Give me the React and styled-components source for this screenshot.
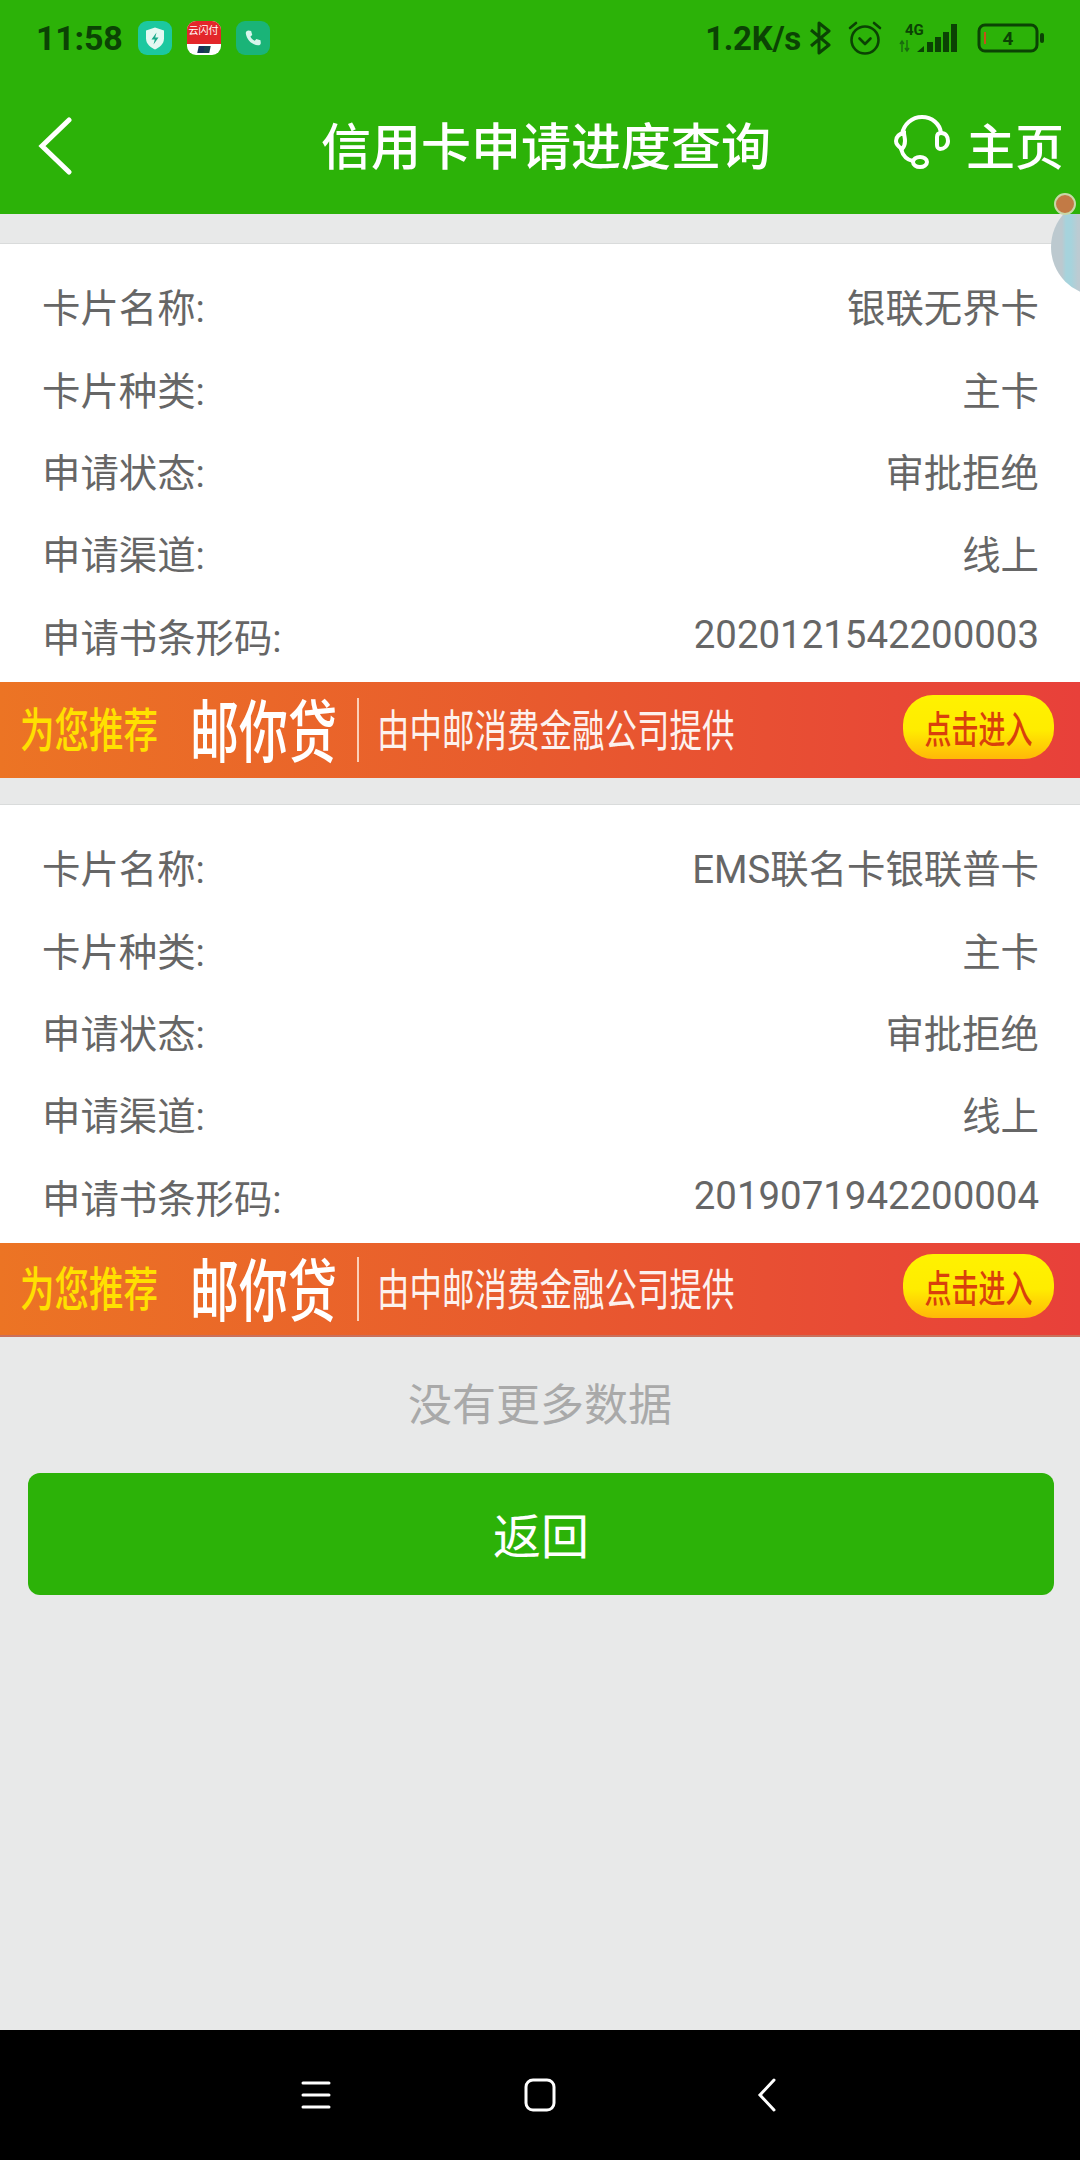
import React from 'react';
import styled, { createGlobalStyle } from 'styled-components';

const GREEN = '#2cb208';
const STATUS_INK = '#0b4304';

const GlobalStyle = createGlobalStyle`
  html, body {
    margin: 0;
    padding: 0;
    background: #e8e9e9;
    font-family: Roboto, "Noto Sans CJK SC", sans-serif;
  }
  * { box-sizing: border-box; }
`;

const Page = styled.div`
  position: relative;
  width: 1080px;
  height: 2160px;
  display: flex;
  flex-direction: column;
  overflow: hidden;
  background: #e8e9e9;
`;

const TopArea = styled.header`
  position: relative;
  z-index: 2;
  background: ${GREEN};
  height: 214px;
  flex-shrink: 0;
`;

const StatusBar = styled.div`
  height: 78px;
  padding: 0 35px 2px 36px;
  display: flex;
  align-items: center;
  justify-content: space-between;
`;

const StatusGroup = styled.div`
  display: flex;
  align-items: center;
  gap: ${props => props.$gap || 15}px;
`;

const Clock = styled.span`
  font-size: 34px;
  font-weight: 700;
  color: ${STATUS_INK};
  letter-spacing: -0.2px;
`;

const Speed = styled.span`
  font-size: 33px;
  font-weight: 700;
  color: ${STATUS_INK};
  letter-spacing: -0.3px;
  margin-right: -8px;
`;

const AppBadge = styled.div`
  width: 34px;
  height: 34px;
  border-radius: 9px;
  background: ${props => props.$bg};
  display: flex;
  align-items: center;
  justify-content: center;
`;

const PayBadge = styled.div`
  width: 34px;
  height: 34px;
  border-radius: 9px;
  overflow: hidden;
  background: #fff;
  display: flex;
  flex-direction: column;
`;

const PayTop = styled.div`
  height: 23px;
  background: #e3262a;
  color: #fff;
  font-size: 10px;
  line-height: 17px;
  text-align: center;
  white-space: nowrap;
  font-family: "Noto Sans CJK SC", sans-serif;
`;

const PayMark = styled.div`
  width: 12px;
  height: 7px;
  margin: 2px auto 0;
  background: linear-gradient(90deg, #17325c 50%, #16434f 50%);
  transform: skewX(-12deg);
`;

const NavBar = styled.div`
  height: 136px;
  display: grid;
  grid-template-columns: 230px 1fr 230px;
  align-items: center;
  padding-bottom: 6px;
`;

const BackButton = styled.div`
  padding: 6px 0 0 38px;
  display: flex;
  align-items: center;
`;

const Title = styled.h1`
  margin: 0;
  padding-left: 12px;
  text-align: center;
  color: #fff;
  font-size: 50px;
  font-weight: 500;
  white-space: nowrap;
`;

const HomeLink = styled.div`
  display: flex;
  align-items: center;
  justify-content: flex-end;
  gap: 16px;
  padding-right: 16px;
  color: #fff;
  font-size: 49px;
  font-weight: 500;
`;

const Content = styled.main`
  flex: 1;
  padding-top: 29px;
`;

const Record = styled.section`
  margin-bottom: ${props => props.$last ? 0 : 26}px;
`;

const Card = styled.div`
  background: #fff;
  border-top: 1px solid #d9dbdb;
  padding: 20px 41px 6px 42px;
`;

const Row = styled.div`
  height: 82.4px;
  display: flex;
  align-items: center;
  justify-content: space-between;
  color: #666;
  font-size: 38.4px;
  white-space: nowrap;
`;

const Banner = styled.div`
  height: ${props => props.$last ? 94 : 96}px;
  padding: 0 26px 6px 20px;
  display: flex;
  align-items: center;
  background: linear-gradient(90deg, #ec7424 0%, #e85a2e 50%, #e8403a 100%);
  border-bottom: ${props => props.$last ? '2px solid #c9705c' : 'none'};
  font-family: "Noto Sans CJK SC", sans-serif;
`;

const BannerLead = styled.span`
  color: #ffe000;
  font-size: 34.5px;
  font-weight: 500;
  white-space: nowrap;
  transform: scaleY(1.35);
`;

const BannerBrand = styled.span`
  color: #fff;
  font-size: 49px;
  font-weight: 500;
  margin-left: 32px;
  white-space: nowrap;
  transform: scaleY(1.4);
`;

const BannerRule = styled.span`
  width: 2px;
  height: 64px;
  margin: 6px 18px 0 20px;
  background: rgba(255, 235, 220, 0.8);
`;

const BannerText = styled.span`
  color: #fff;
  opacity: 0.92;
  font-size: 32.5px;
  white-space: nowrap;
  transform: scaleY(1.38);
`;

const EnterPill = styled.div`
  margin-left: auto;
  width: 151px;
  height: 64px;
  border-radius: 30px;
  background: linear-gradient(180deg, #fff200 0%, #ffec00 55%, #ffb808 100%);
  display: flex;
  align-items: center;
  justify-content: center;
`;

const EnterLabel = styled.span`
  color: #d9400c;
  font-size: 27px;
  font-weight: 500;
  white-space: nowrap;
  transform: scaleY(1.4);
`;

const NoMore = styled.div`
  height: 136px;
  display: flex;
  align-items: center;
  justify-content: center;
  color: #a9a9a9;
  font-size: 44px;
  padding-bottom: 6px;
`;

const BackAction = styled.button`
  display: block;
  width: 1026px;
  height: 122px;
  margin: 0 26px 0 28px;
  border: none;
  border-radius: 12px;
  background: ${GREEN};
  color: #fff;
  font-family: inherit;
  font-size: 48px;
  padding-bottom: 2px;
`;

const SystemBar = styled.footer`
  height: 130px;
  flex-shrink: 0;
  background: #000;
  display: grid;
  grid-template-columns: repeat(3, 32px);
  justify-content: center;
  column-gap: 192px;
  align-items: center;
  justify-items: center;
`;

const FloatDot = styled.div`
  position: absolute;
  left: 1054px;
  top: 193px;
  width: 22px;
  height: 22px;
  border-radius: 50%;
  background: #c27a45;
  border: 2px solid #c8d8a8;
  z-index: 3;
`;

const FloatBall = styled.div`
  position: absolute;
  left: 1051px;
  top: 198px;
  width: 98px;
  height: 98px;
  border-radius: 50%;
  background: linear-gradient(90deg, #bcc9cf 0, #bcc9cf 11px, #a6d3dc 15px, #a6d3dc 20px, #bccbd2 27px);
  z-index: 1;
`;

const ShieldIcon = () => (
  <svg width="20" height="25" viewBox="0 0 20 24">
    <path d="M10 1 L19 4 V12 C19 18 14 21 10 23 C6 21 1 18 1 12 V4 Z" fill="#e4f8f2" />
    <path d="M11.5 6 L6.5 13 H9.8 L8.5 18 L13.5 11 H10.2 Z" fill="#17a98a" />
  </svg>
);

const PhoneIcon = () => (
  <svg width="18" height="18" viewBox="0 0 24 24">
    <path d="M6 2 L9.5 2.6 L11 8 L8.6 10 C9.8 12.8 11.6 14.6 14.4 15.8 L16.4 13.4 L22 15 L22.4 18.6 C22.4 20.6 20.6 22 18.6 21.8 C10 20.8 3.4 14 2.4 5.6 C2.2 3.6 4 2 6 2 Z" fill="#d8f5ec" />
  </svg>
);

const BluetoothIcon = () => (
  <svg width="22" height="36" viewBox="0 0 22 36" fill="none" stroke={STATUS_INK} strokeWidth="3" strokeLinejoin="round">
    <path d="M2 10 L20 25 L10 33 V3 L20 11 L2 26" />
  </svg>
);

const AlarmIcon = () => (
  <svg width="36" height="36" viewBox="0 0 36 36" fill="none" stroke={STATUS_INK} strokeWidth="2.6" strokeLinecap="round" strokeLinejoin="round">
    <circle cx="18" cy="20" r="13.5" />
    <path d="M12.5 18.5 L18 24 L23.5 18.5" />
    <path d="M3 8 L9 3" />
    <path d="M33 8 L27 3" />
  </svg>
);

const SignalIcon = () => (
  <svg width="62" height="32" viewBox="0 0 62 32">
    <text x="6" y="13" fontFamily="Roboto, sans-serif" fontWeight="700" fontSize="15" fill={STATUS_INK}>4G</text>
    <path d="M3 30 V19 M1 22 L3 19 L5 22 M8 18 V29 M6 26 L8 29 L10 26" stroke="#1a6a10" strokeWidth="1.4" fill="none" />
    <path d="M18 30 L25 24 V30 Z" fill={STATUS_INK} />
    <rect x="28" y="20" width="6" height="10" fill={STATUS_INK} />
    <rect x="36" y="15" width="6" height="15" fill={STATUS_INK} />
    <rect x="44" y="10" width="6" height="20" fill={STATUS_INK} />
    <rect x="52" y="2" width="6" height="28" fill={STATUS_INK} />
  </svg>
);

const BatteryIcon = () => (
  <svg width="68" height="30" viewBox="0 0 68 30">
    <rect x="2" y="2" width="58" height="26" rx="6" fill="none" stroke={STATUS_INK} strokeWidth="3" />
    <rect x="7" y="9" width="2" height="12" fill="#c6501a" />
    <rect x="63" y="10" width="4" height="10" rx="2" fill={STATUS_INK} />
    <text x="31" y="22" textAnchor="middle" fontFamily="Roboto, sans-serif" fontWeight="700" fontSize="19" fill={STATUS_INK}>4</text>
  </svg>
);

const BackIcon = () => (
  <svg width="34" height="58" viewBox="0 0 34 58" fill="none" stroke="#fff" strokeWidth="5" strokeLinecap="round">
    <path d="M31 3 L4 29 L31 55" />
  </svg>
);

const HeadsetIcon = () => (
  <svg width="56" height="56" viewBox="0 0 56 56" fill="none" stroke="#fff" strokeWidth="4" strokeLinecap="round">
    <path d="M8 19 C10 9 18 2 28 2 C38 2 46 9 47 18" />
    <path d="M10 18 C5 19 2 22 2 26 C2 29 5 32 8 34 C10 32 11 29 11 26 C11 23 10 20 10 18 Z" />
    <path d="M47 18 C52 18 54 22 54 26 C54 31 50 34 46 34 C44 34 43 32 43 30 V22 C43 19 45 18 47 18 Z" />
    <path d="M7 34 C9 41 13 45 19 46" />
    <ellipse cx="26" cy="47" rx="7" ry="5" />
  </svg>
);

const MenuIcon = () => (
  <svg width="30" height="30" viewBox="0 0 30 30" stroke="#fff" strokeWidth="3" strokeLinecap="round">
    <path d="M2 3 H28 M2 15 H28 M2 27 H28" />
  </svg>
);

const HomeIcon = () => (
  <svg width="32" height="34" viewBox="0 0 32 34" fill="none" stroke="#fff" strokeWidth="3">
    <rect x="2" y="2" width="28" height="30" rx="7" />
  </svg>
);

const BackNavIcon = () => (
  <svg width="24" height="34" viewBox="-6 0 24 34" fill="none" stroke="#fff" strokeWidth="3" strokeLinecap="round">
    <path d="M16 2 L2 17 L16 32" />
  </svg>
);

const records = [
  { name: '银联无界卡', type: '主卡', status: '审批拒绝', channel: '线上', code: '2020121542200003' },
  { name: 'EMS联名卡银联普卡', type: '主卡', status: '审批拒绝', channel: '线上', code: '2019071942200004' },
];

function App() {
  return (
    <Page>
      <GlobalStyle />
      <TopArea>
        <StatusBar>
          <StatusGroup>
            <Clock>11:58</Clock>
            <AppBadge $bg="#1cc8a0"><ShieldIcon /></AppBadge>
            <PayBadge>
              <PayTop>云闪付</PayTop>
              <PayMark />
            </PayBadge>
            <AppBadge $bg="#1ab478"><PhoneIcon /></AppBadge>
          </StatusGroup>
          <StatusGroup $gap={16}>
            <Speed>1.2K/s</Speed>
            <BluetoothIcon />
            <AlarmIcon />
            <SignalIcon />
            <BatteryIcon />
          </StatusGroup>
        </StatusBar>
        <NavBar>
          <BackButton><BackIcon /></BackButton>
          <Title>信用卡申请进度查询</Title>
          <HomeLink><HeadsetIcon />主页</HomeLink>
        </NavBar>
        <FloatDot />
      </TopArea>

      <FloatBall />

      <Content>
        {records.map((item, index) => (
          <Record key={item.code} $last={index === records.length - 1}>
            <Card>
              <Row><span>卡片名称:</span><span>{item.name}</span></Row>
              <Row><span>卡片种类:</span><span>{item.type}</span></Row>
              <Row><span>申请状态:</span><span>{item.status}</span></Row>
              <Row><span>申请渠道:</span><span>{item.channel}</span></Row>
              <Row><span>申请书条形码:</span><span>{item.code}</span></Row>
            </Card>
            <Banner $last={index === records.length - 1}>
              <BannerLead>为您推荐</BannerLead>
              <BannerBrand>邮你贷</BannerBrand>
              <BannerRule />
              <BannerText>由中邮消费金融公司提供</BannerText>
              <EnterPill><EnterLabel>点击进入</EnterLabel></EnterPill>
            </Banner>
          </Record>
        ))}
        <NoMore>没有更多数据</NoMore>
        <BackAction>返回</BackAction>
      </Content>

      <SystemBar>
        <MenuIcon />
        <HomeIcon />
        <BackNavIcon />
      </SystemBar>
    </Page>
  );
}

export default App;
